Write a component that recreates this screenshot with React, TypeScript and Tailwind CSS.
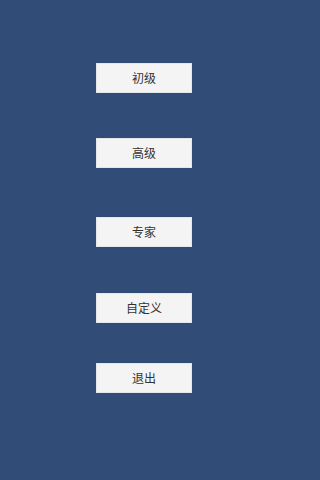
import React from "react";

const ITEMS = [
  { label: "初级", mt: "mt-[63px]" },
  { label: "高级", mt: "mt-[45px]" },
  { label: "专家", mt: "mt-[49px]" },
  { label: "自定义", mt: "mt-[46px]" },
  { label: "退出", mt: "mt-[40px]" },
];

export default function App() {
  return (
    <div
      className="min-h-screen w-full bg-[#314c77]"
      style={{ fontFamily: '"Noto Sans CJK SC", "Noto Sans", sans-serif' }}
    >
      <div className="flex h-[480px] w-[288px] flex-col items-center">
        {ITEMS.map((it) => (
          <button
            key={it.label}
            className={`${it.mt} flex h-[30px] w-[96px] items-center justify-center border border-[#e4e6ea] bg-[#f4f4f4] text-[12px] text-[#333333]`}
          >
            {it.label}
          </button>
        ))}
      </div>
    </div>
  );
}
